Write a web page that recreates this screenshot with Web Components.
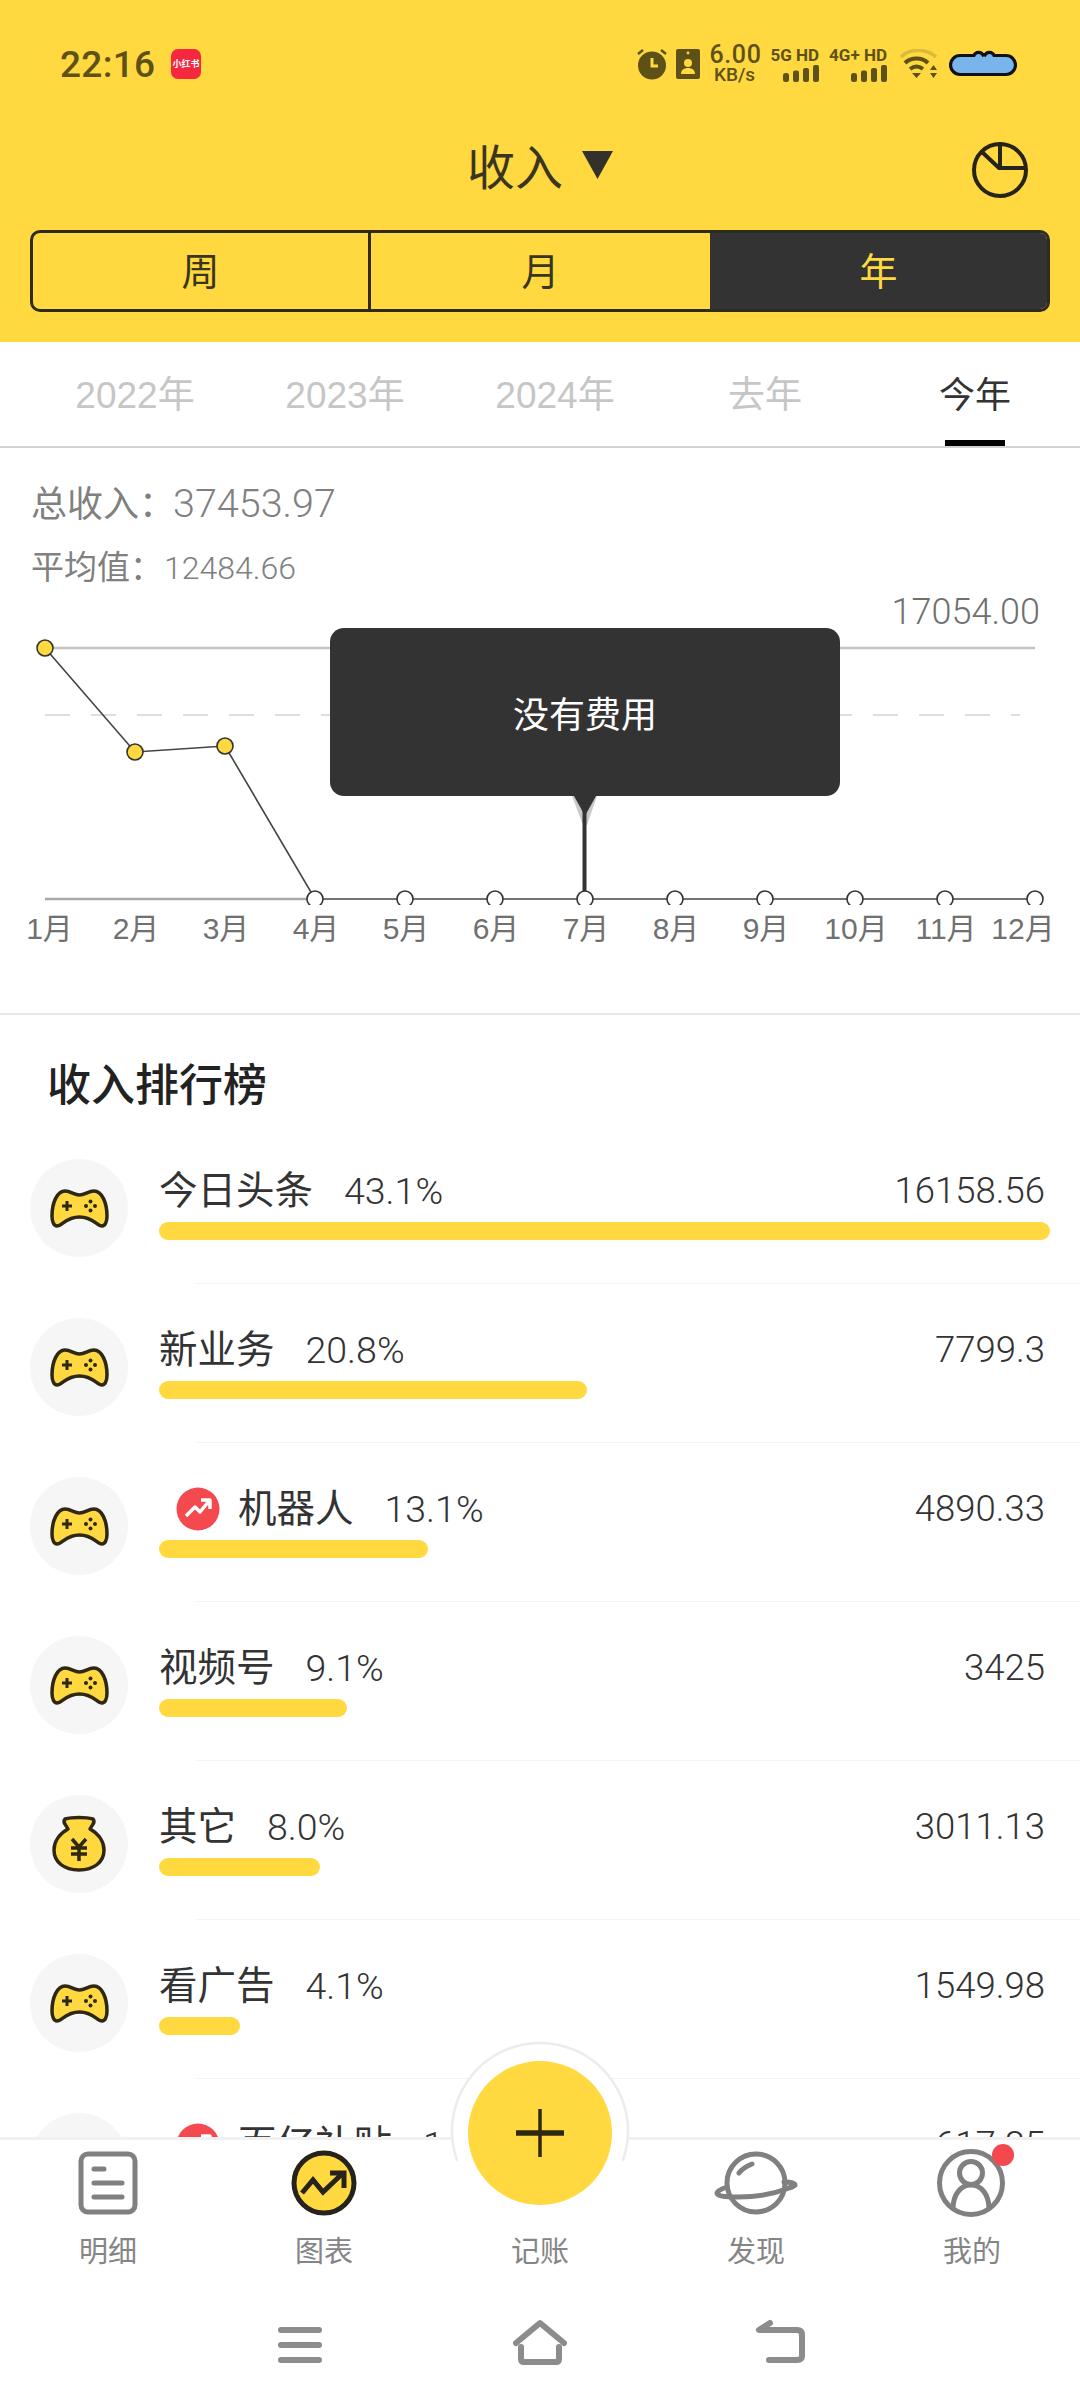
<!DOCTYPE html>
<html lang="zh">
<head>
<meta charset="utf-8">
<title>收入</title>
<style>
html,body{margin:0;padding:0;background:#fff}
body{width:1080px;height:2408px;overflow:hidden;font-family:"Liberation Sans","Noto Sans CJK SC",sans-serif;color:#333}
</style>
</head>
<body>
<app-shell>
  <top-header>
    <status-bar></status-bar>
    <title-row>收入</title-row>
    <segment-bar></segment-bar>
  </top-header>
  <year-tabs></year-tabs>
  <summary-block></summary-block>
  <trend-chart></trend-chart>
  <rank-list>
    <rank-row icon="game" name="今日头条" pct="43.1%" value="16158.56" bar="891"></rank-row>
    <rank-row icon="game" name="新业务" pct="20.8%" value="7799.3" bar="428"></rank-row>
    <rank-row icon="game" hot name="机器人" pct="13.1%" value="4890.33" bar="269"></rank-row>
    <rank-row icon="game" name="视频号" pct="9.1%" value="3425" bar="188"></rank-row>
    <rank-row icon="bag" name="其它" pct="8.0%" value="3011.13" bar="161"></rank-row>
    <rank-row icon="game" name="看广告" pct="4.1%" value="1549.98" bar="81"></rank-row>
    <rank-row icon="game" hot name="百亿补贴" pct="1.6%" value="617.85" bar="33"></rank-row>
  </rank-list>
  <bottom-bar></bottom-bar>
</app-shell>
<script>
const define=(name,html,init)=>customElements.define(name,class extends HTMLElement{
  connectedCallback(){
    if(this.shadowRoot)return;
    const r=this.attachShadow({mode:'open'});
    r.innerHTML=typeof html==='function'?html(this):html;
    if(init)init(r,this);
  }
});

define('app-shell',`<style>:host{display:flex;flex-direction:column;width:1080px;height:2408px;overflow:hidden}</style><slot></slot>`);
define('top-header',`<style>:host{display:block;height:342px;background:#ffd93f;flex:none}</style><slot></slot>`);

const dim='#5e5118';
define('status-bar',`<style>
:host{display:flex;align-items:center;height:128px;padding:0 63px 0 60px;box-sizing:border-box;color:${dim}}
.time{font:500 37px/1 Roboto,sans-serif;width:94px;letter-spacing:.3px}
.xhs{margin-left:17px;width:30px;height:30px;border-radius:7px;background:#f5283f;color:#fff;font:700 9px/30px "Noto Sans CJK SC",sans-serif;text-align:center;white-space:nowrap;overflow:hidden}
.right{margin-left:auto;display:flex;align-items:center;height:34px}
svg{display:block;flex:none}
.speed{margin-left:9px;width:50px;text-align:center;font-family:Roboto,sans-serif;font-weight:500}
.speed b{display:block;font:500 25px/22px Roboto,sans-serif;letter-spacing:.6px}
.speed i{display:block;font:500 19px/18px Roboto,sans-serif}
.net{margin-left:11px;display:flex;flex-direction:column;align-items:flex-end}
.net b{font:700 17px/16px Roboto,sans-serif;white-space:nowrap;margin-bottom:2px}
</style>
<span class="time">22:16</span><span class="xhs">小红书</span>
<div class="right">
<svg width="32" height="32" viewBox="0 0 32 32"><circle cx="16" cy="17.5" r="14" fill="${dim}"/><path d="M16 10v8h6" fill="none" stroke="#ffd93f" stroke-width="3"/><path d="M2 6l5-4M30 6l-5-4" stroke="${dim}" stroke-width="2.5"/></svg>
<svg width="24" height="30" viewBox="0 0 24 30" style="margin-left:8px"><rect width="24" height="30" rx="2" fill="${dim}"/><circle cx="12" cy="4" r="1.4" fill="#ffd93f"/><circle cx="12" cy="14" r="4" fill="#ffd93f"/><path d="M5 25c0-4 3-6 7-6s7 2 7 6z" fill="#ffd93f"/></svg>
<div class="speed"><b>6.00</b><i>KB/s</i></div>
<div class="net"><b>5G HD</b><svg width="36" height="17" viewBox="0 0 36 17" fill="${dim}"><rect x="0" y="8" width="6" height="9" rx="2.5"/><rect x="10" y="5.5" width="6" height="11.5" rx="2"/><rect x="20" y="3" width="6" height="14" rx="2"/><rect x="30" y="0" width="6" height="17" rx="2"/></svg></div>
<div class="net" style="margin-left:10px"><b>4G+ HD</b><svg width="36" height="17" viewBox="0 0 36 17" fill="${dim}"><rect x="0" y="8" width="6" height="9" rx="2.5"/><rect x="10" y="5.5" width="6" height="11.5" rx="2"/><rect x="20" y="3" width="6" height="14" rx="2"/><rect x="30" y="0" width="6" height="17" rx="2"/></svg></div>
<svg width="38" height="30" viewBox="0 0 38 30" style="margin-left:13px"><path d="M1 8c9-9 25-9 35 0" fill="none" stroke="#dcb93a" stroke-width="3.5"/><path d="M5 14c6-6 17-6 23 0M10 20c4-3 9-3 13 0" fill="none" stroke="${dim}" stroke-width="4"/><path d="M12 24h9l-4.500 5zM30 21h7l-3.500-5zM30 24h7l-3.500 5z" fill="${dim}"/></svg>
<svg width="68" height="30" viewBox="0 0 68 30" style="margin-left:11px"><path d="M11 7.500H25a5 5 0 0 1 9-.5 3 3 0 0 1 2 0 5 5 0 0 1 9 .5H57a9.500 9.500 0 0 1 0 19H11a9.500 9.500 0 0 1 0-19z" transform="translate(0 -1)" fill="#7ab4ec" stroke="#111" stroke-width="3.2"/></svg>
</div>`);

define('title-row',`<style>
:host{display:flex;align-items:center;justify-content:center;height:82px;margin-bottom:20px;position:relative;color:#3a3520;font-size:48px;line-height:84px}
.tri{width:31px;height:28px;margin:-8px 0 0 19px;background:#33312a;clip-path:polygon(0 0,100% 0,50% 100%)}
svg{position:absolute;left:971px;top:13px}
</style><span><slot></slot></span><span class="tri"></span>
<svg width="58" height="58" viewBox="0 0 58 58" fill="none" stroke="#26231a" stroke-width="4" stroke-linecap="round"><circle cx="29" cy="29" r="26"/><path d="M11 11L28 27H54M29 3V27"/></svg>`);

define('segment-bar',`<style>
:host{display:flex;height:82px;margin:0 30px 0 30px;box-sizing:border-box;border:3px solid #2f2b1c;border-radius:10px;overflow:hidden;font-size:38px;line-height:78px;text-align:center;color:#3a3520}
div{box-sizing:border-box}
.a{width:338px;border-right:3px solid #2f2b1c}
.b{width:339px}
.c{flex:1;background:#333;color:#ffd93f}
</style><div class="a">周</div><div class="b">月</div><div class="c">年</div>`);

define('year-tabs',`<style>
:host{display:grid;grid-template-columns:repeat(5,210px);height:106px;box-sizing:border-box;padding:0 30px;border-bottom:2px solid #d2d2d2;flex:none;font-size:37px;line-height:108px;text-align:center;color:#c6c6c6}
div{position:relative;height:104px}
.on{color:#333;font-size:36px}
.on::after{content:"";position:absolute;left:75px;width:60px;height:6px;bottom:0;background:#000}
</style><div>2022年</div><div>2023年</div><div>2024年</div><div>去年</div><div class="on">今年</div>`);

define('summary-block',`<style>
:host{display:block;flex:none;padding:24px 0 0 31px;color:#808080;height:151px;box-sizing:border-box}
div{height:64px;line-height:64px;font-size:36px;white-space:nowrap}
.v1{font:300 39.500px/64px Roboto,sans-serif;margin-left:-2px}
.s{font-size:33px}
.v2{font:300 32px/64px Roboto,sans-serif;margin-left:1px}
</style><div>总收入：<span class="v1">37453.97</span></div><div class="s">平均值：<span class="v2">12484.66</span></div>`);

define('chart-tooltip',`<style>
:host{position:absolute;left:330px;top:29px;width:510px;height:168px;background:#333;border-radius:14px;color:#fff;font-size:36px;display:flex;align-items:center;justify-content:center}
</style><slot></slot>`);

const px=i=>45+90*i;
const pts=[23,127,121,274,274,274,274,274,274,274,274,274];
define('trend-chart',()=>{
  const poly=pts.map((y,i)=>px(i)+','+y).join(' ');
  const dots=pts.map((y,i)=>`<circle cx="${px(i)}" cy="${y}" r="8" fill="${i<3?'#ffd93f':'#fff'}" stroke="#333" stroke-width="1.6"/>`).join('');
  const months=['1月','2月','3月','4月','5月','6月','7月','8月','9月','10月','11月','12月'];
  return `<style>
:host{display:block;position:relative;flex:none;height:416px;box-sizing:border-box;border-bottom:2px solid #e6e6e6}
.max{height:26px;line-height:26px;font:300 36px/26px Roboto,sans-serif;color:#707070;text-align:right;padding-right:40px}
svg{display:block}
.m{display:grid;grid-template-columns:repeat(12,90px);font-size:30px;line-height:48px;color:#707070;text-align:center;white-space:nowrap}
.m span{padding-left:2px}
.m span:first-child{padding-left:9px}
.m span:nth-child(12){margin-left:-24px;padding-left:0}
</style>
<div class="max">17054.00</div>
<svg width="1080" height="280" viewBox="0 0 1080 280" fill="none">
<path d="M45 23H1035" stroke="#c4c4c4" stroke-width="2.500"/>
<path d="M45 90H1020" stroke="#dedede" stroke-width="2" stroke-dasharray="25 21"/>
<path d="M45 274H314" stroke="#a8a8a8" stroke-width="2.500"/>
<polyline points="${poly}" stroke="#444" stroke-width="1.600"/>
<path d="M572 171H597L587 200H583Z" fill="#c9c9c9"/>
<path d="M574 171H596L586 189H584Z" fill="#333"/>
<path d="M584.500 185V272" stroke="#333" stroke-width="4"/>
${dots}
</svg>
<div class="m">${months.map(m=>`<span>${m}</span>`).join('')}</div>
<chart-tooltip>没有费用</chart-tooltip>`;
});

define('rank-list',`<style>
:host{display:block;flex:1;min-height:0;overflow:hidden}
h2{margin:0;padding:35px 0 11px 47px;font-size:44px;line-height:64px;font-weight:500;color:#222;font-family:"Noto Sans CJK SC",sans-serif}
</style><h2>收入排行榜</h2><slot></slot>`);

const ic={
game:`<svg width="61" height="41" viewBox="0 0 61 41"><path d="M16 3C22 3 25 7 30.500 7S39 3 45 3C53 3 58 15 58 28 58 34 56 38 53 38 48 38 44 29 30.500 29S13 38 8 38C5 38 3 34 3 28 3 15 8 3 16 3Z" fill="#ffd93f" stroke="#2e2812" stroke-width="3.500" stroke-linejoin="round"/><path d="M13 18H23M18 13V23" stroke="#2e2812" stroke-width="3"/><g fill="#2e2812"><circle cx="41.500" cy="13.500" r="2"/><circle cx="41.500" cy="22.500" r="2"/><circle cx="37" cy="18" r="2"/><circle cx="46" cy="18" r="2"/></g></svg>`,
bag:`<svg width="56" height="58" viewBox="0 0 56 58"><path d="M14 4C21 2 35 2 42 4 45 7 41 10 39 14 48 19 53 27 53 35 53 47 43 55 28 55 13 55 3 47 3 35 3 27 8 19 17 14 15 10 11 7 14 4Z" fill="#ffd93f" stroke="#2e2812" stroke-width="3.500" stroke-linejoin="round"/><path d="M21 24L28 32 35 24M20 33H36M20 39H36M28 32V46" fill="none" stroke="#2e2812" stroke-width="3.500"/></svg>`};

define('rank-row',h=>{
  const a=n=>h.getAttribute(n);
  return `<style>
:host{display:block;height:159px;box-sizing:border-box;position:relative}
.row{display:flex;height:158px}
.icon{flex:none;width:98px;height:98px;border-radius:50%;background:#f6f6f6;margin:34px 31px 0 30px;display:flex;align-items:center;justify-content:center}
.main{width:891px;padding-top:42px}
.top{display:flex;align-items:center;height:48px;padding-right:5px}
.name{font-size:38.500px;line-height:48px;color:#333;white-space:nowrap}
.pct{margin-left:31px;font:300 37.500px/48px Roboto,sans-serif;color:#333}
.val{margin-left:auto;font:300 36.500px/48px Roboto,sans-serif;color:#333}
.bar{height:18px;border-radius:9px;background:#ffd93f;margin-top:7px}
.hot{flex:none;margin:0 18px 0 17px;display:block}
.sep{height:1px;margin-left:196px;background:#f4f4f4}
</style>
<div class="row"><span class="icon">${ic[a('icon')]}</span>
<div class="main"><div class="top">${h.hasAttribute('hot')?`<svg class="hot" width="44" height="44" viewBox="0 0 44 44"><circle cx="22" cy="22" r="21.500" fill="#f4494e"/><path d="M10 29L19 20 24 25 33 14M25 13H34V22" fill="none" stroke="#fff" stroke-width="3.500" stroke-linejoin="round"/></svg>`:''}<span class="name">${a('name')}</span><span class="pct">${a('pct')}</span><span class="val">${a('value')}</span></div>
<div class="bar" style="width:${a('bar')}px"></div></div></div><div class="sep"></div>`;
});

define('nav-item',`<style>
:host{display:flex;flex-direction:column;align-items:center;width:216px;color:#858585;font-size:29px;line-height:40px}
.i{height:70px;margin-bottom:14px;position:relative;width:100%}
::slotted(svg){display:block;margin:0 auto;overflow:visible}
</style><div class="i"><slot name="icon"></slot></div><slot></slot>`);

define('bottom-bar',`<style>
:host{display:block;position:relative;flex:none;height:271px;box-sizing:border-box;background:#fff;border-top:3px solid #f1f1f1}
.tabs{display:flex;padding-top:8px}
.os{display:flex;gap:180px;padding-left:270px;margin-top:45px}
.fab{position:absolute;left:445px;top:-104px;width:190px;height:190px}
.plus{position:absolute;left:468px;top:-79px;width:144px;height:144px;border-radius:50%;background:#ffd93f}
.plus svg{display:block}
</style>
<div class="tabs">
<nav-item><svg slot="icon" width="60" height="70" viewBox="0 0 60 70" fill="none" stroke="#808080" stroke-linecap="round"><rect x="3" y="6" width="54" height="58" rx="7" stroke-width="5"/><path d="M16 21H26M16 35H44M16 49H44" stroke-width="5"/></svg>明细</nav-item>
<nav-item><svg slot="icon" width="70" height="70" viewBox="0 0 70 70" fill="none"><circle cx="35" cy="35" r="30" fill="#ffd93f" stroke="#26231a" stroke-width="5"/><path d="M13 45L24 32 34 44 54 25M41 25H55V40" stroke="#26231a" stroke-width="5"/></svg>图表</nav-item>
<nav-item>记账</nav-item>
<nav-item><svg slot="icon" width="84" height="70" viewBox="0 0 84 70" fill="none" stroke="#808080" stroke-width="5" stroke-linecap="round"><circle cx="42" cy="35" r="29"/><path d="M13 39C7 41 3 43 3 45 3 48 10 49 24 49 44 49 62 45 72 41 78 39 81 38 81 37 81 35 76 34 70 34"/><path d="M25 25C28 21 33 18 38 16"/></svg>发现</nav-item>
<nav-item><svg slot="icon" width="96" height="70" viewBox="0 0 96 70" fill="none" stroke="#808080" stroke-width="5"><circle cx="47" cy="35" r="31.500"/><circle cx="47" cy="25" r="11.500"/><path d="M29 61C29 46 37 37 47 37S65 46 65 61"/><circle cx="79" cy="7" r="11" fill="#f5474f" stroke="none"/></svg>我的</nav-item>
</div>
<div class="os">
<svg width="60" height="50" viewBox="0 0 60 50" fill="none" stroke="#8c8c8c" stroke-width="6" stroke-linecap="round"><path d="M11 13H49M11 28H49M11 43H49"/></svg>
<svg width="60" height="50" viewBox="0 0 60 50" fill="none" stroke="#8c8c8c" stroke-width="6" stroke-linecap="round" stroke-linejoin="round"><path d="M6 27L30 7 54 27M11 31V43Q11 46 14 46H46Q49 46 49 43V31" transform="translate(0 -1)"/></svg>
<svg width="60" height="50" viewBox="0 0 60 50" fill="none" stroke="#8c8c8c" stroke-width="6" stroke-linecap="round" stroke-linejoin="round"><path d="M20 6L9 13H47Q52 13 52 18V39Q52 43 47 43H19"/></svg>
</div>
<svg class="fab" viewBox="0 0 190 190" fill="none"><circle cx="95" cy="95" r="88" fill="#fff"/><path d="M12.300 125A88 88 0 1 1 177.700 125" stroke="#ececec" stroke-width="2.500"/></svg>
<div class="plus"><svg width="144" height="144" viewBox="0 0 144 144"><path d="M48 72H96" stroke="#2e2812" stroke-width="5.500"/><path d="M72 48V96" stroke="#2e2812" stroke-width="3.500"/></svg></div>`);
</script>
</body>
</html>
